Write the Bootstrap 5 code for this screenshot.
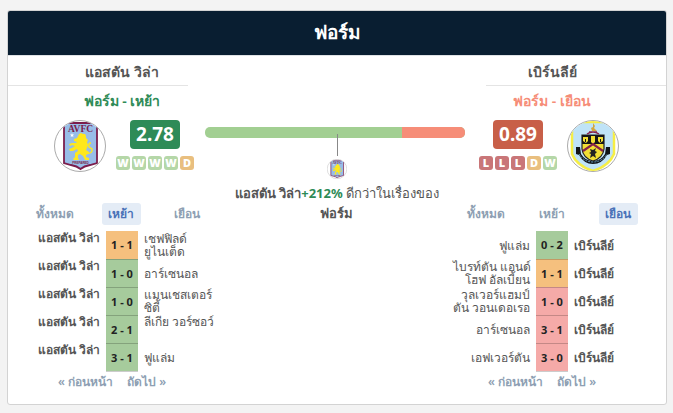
<!DOCTYPE html>
<html lang="th">
<head>
<meta charset="utf-8">
<meta name="viewport" content="width=device-width, initial-scale=1">
<title>ฟอร์ม</title>
<link href="https://cdn.jsdelivr.net/npm/bootstrap@5.3.0/dist/css/bootstrap.min.css" rel="stylesheet">
<style>
body{background:#f3f3f3;font-family:"Noto Sans",Tahoma,sans-serif;font-size:12px;color:#555;line-height:16px}
.panel{margin:10px 6px 7px 7px;border:1px solid #d3d3d3;border-radius:3px;background:#fff;overflow:hidden}
.panel-title{background:#091e31;color:#fff;font-size:19px;font-weight:600;line-height:42px;height:44px}
.compare{display:grid;grid-template-columns:213fr 232fr 213fr;border-top:1px solid #dfe2e5;padding-bottom:12px}
.team-head{width:180px}
.team-name{font-size:14px;font-weight:600;line-height:32px;border-bottom:1px solid #e4e4e4;height:30px}
.form-kind{font-size:14px;font-weight:600;line-height:30px;height:30px}
.green{color:#2e8b57}
.coral{color:#f68d78}
.summary{height:52px;margin:4px 0 31px;gap:10px}
.home .summary{padding-left:46px}
.away .summary{padding-left:26px}
.crest{width:52px;height:52px}
.rating{width:50px;height:29px;border-radius:4px;color:#fff;font-size:19px;font-weight:700;line-height:29px;margin-bottom:7px}
.rating.good{background:#2e8b57}
.rating.bad{background:#c85f48}
.pills{gap:2px}
.pill{width:14px;height:14px;border-radius:3px;color:#fff;font-size:11px;font-weight:900;line-height:14px;display:flex;justify-content:center}
.w{background:#b5d7a8}.d{background:#e9bf7f}.l{background:#c97678}
.home .tabs{margin:0 1px 6px 14px}
.away .tabs{margin:0 15px 6px 0}
.tabs{display:grid;grid-template-columns:repeat(3,1fr);justify-items:center}
.tabs button{border:0;background:none;border-radius:3px;color:#8e9fb3;font-size:12px;font-weight:600;height:22px;line-height:22px;width:39px;padding:0;white-space:nowrap;display:flex;justify-content:center}
.tabs button.on{background:#e4ecf6;color:#4a72b8}
.games{border-collapse:collapse;line-height:13px;table-layout:fixed;width:100%}
.games td{height:28px;padding:0 6px;vertical-align:middle;white-space:nowrap}
.games .own{font-weight:600}
.home .own{text-align:right;vertical-align:top}
.away .games .rival{text-align:right;padding-left:0}
.home .c1{width:98px}
.away .c1{width:83px}
.c2{width:32px}
.games .score{padding:0;text-align:center;font-size:11px;font-weight:700;color:#222;border-bottom:1px solid #0003}
.win{background:#a6cb9c}.draw{background:#f5c07e}.loss{background:#f5aaa8}
.pager{gap:14px;line-height:20px;font-weight:600}
.home .pager{padding-left:50px}
.away .pager{padding-left:35px}
.pager a{color:#8e9fb3;text-decoration:none;white-space:nowrap}
.balance{padding-top:71px}
.bar{height:11px;border-radius:5px;margin:0 -12px 0 -16px;background:#a2cf92;align-self:stretch}
.bar .rest{width:24.3%;background:#f68d78}
.stem{width:1px;height:22px;background:#888;margin-top:-4px}
.mini{width:20px;height:20px;margin:3px 0 4px}
.verdict{font-size:13px;line-height:20px;white-space:nowrap}
</style>
<script src="https://cdn.jsdelivr.net/npm/bootstrap@5.3.0/dist/js/bootstrap.bundle.min.js"></script>
</head>
<body>
<svg class="position-absolute" width="0" height="0" aria-hidden="true">
<clipPath id="round"><circle cx="26" cy="26" r="25"/></clipPath>
<symbol id="villa" viewBox="0 0 52 52">
<circle cx="26" cy="26" r="25.500" fill="#fff" stroke="#aaa"/>
<g clip-path="url(#round)">
<path d="M10 3H43V43L36 45Q30 46 26.500 49 23 46 17 45L10 43Z" fill="#98bde8" stroke="#7b1d4c" stroke-width="1.800"/>
<text x="26.500" y="12" text-anchor="middle" font-family="Liberation Serif,serif" font-weight="700" font-size="9.500" fill="#7b1d4c">AVFC</text>
<path d="M18 13l.6 1.400 1.500.1-1.100 1 .4 1.500-1.400-.8-1.300.8.4-1.500-1.100-1 1.500-.1z" fill="#fff"/>
<path d="M25 14l2-1 2 1 2 0 1 2 0 2 2 2-1 2 1 3-1 3-1 2 3 2-1 2-2 1 0 2 3 1 0 2-4 0-2-4-3-2-2 1 0 3 1 2-5 0-1-1 2-2 0-4 3-2-1-2-4 2-3 0-1-2 3-1 3-2-3-1-2 1-1-2 3-1 4 0 1-1-3-1 0-2 3-1z" fill="#ffe81c"/>
<path d="M32 33q7 1 6-4l-3-2q-1-4 2-4" fill="none" stroke="#ffe81c" stroke-width="1.500"/>
<text x="26.500" y="44" text-anchor="middle" font-family="Liberation Sans,sans-serif" font-weight="700" font-size="3" fill="#7b1d4c">PREPARED</text>
</g>
</symbol>
<symbol id="burnley" viewBox="0 0 52 52">
<circle cx="26" cy="26" r="25.500" fill="#fff" stroke="#aaa"/>
<g clip-path="url(#round)">
<path d="M5 2H47V34Q42 46 26 51 10 46 5 34Z" fill="#bfe3f7" stroke="#f6ee45" stroke-width="2.500"/>
<path d="M15 15H37V29Q36 38 26 41 16 38 15 29Z" fill="#f2df35" stroke="#222" stroke-width="1.200"/>
<path d="M15 15H37V24H15Z" fill="#171717"/>
<path d="M16 17h5v4l-2 2-3-2zM24 16h4v6l-2 2-2-2zM31 17h5v4l-3 2-2-2z" fill="#f2df35"/>
<path d="M18 19h1v3h-1zM33 19h1v3h-1z" fill="#171717"/>
<path d="M16 31l10-7 10 7" fill="none" stroke="#87234a" stroke-width="2.200"/>
<path d="M23 29l3 1 3-2-1 3 2 1-2 2 1 4-3-2-3 2 1-4-2-1 2-1z" fill="#222"/>
<path d="M20 14q6-4 12 0M22 12h8" fill="none" stroke="#87234a" stroke-width="1.500"/>
<path d="M25 11l-1-3 2-1 0-4 2 3-1 2 3 3z" fill="#d5a63b"/>
<path d="M9 27h4l1 7q4 7 12 7t12-7l1-7h4v7l-3 1q-5 9-14 9T12 35l-3-1z" fill="#101418"/>
<path d="M12 34q5 8 14 8t14-8" fill="none" stroke="#6ba4c6" stroke-width="1" stroke-dasharray="2 1"/>
</g>
</symbol>
</svg>
<main class="panel">
<h1 class="panel-title text-center m-0">ฟอร์ม</h1>
<div class="compare">
<section class="home">
<div class="team-head text-center">
<div class="team-name ps-5">แอสตัน วิล่า</div>
<div class="form-kind green ps-5">ฟอร์ม - เหย้า</div>
</div>
<div class="summary d-flex">
<svg class="crest" role="img" aria-label="แอสตัน วิล่า"><use href="#villa"/></svg>
<div class="d-flex flex-column align-items-center">
<div class="rating good text-center">2.78</div>
<div class="pills d-flex"><span class="pill w">W</span><span class="pill w">W</span><span class="pill w">W</span><span class="pill w">W</span><span class="pill d">D</span></div>
</div>
</div>
<div class="tabs"><button type="button">ทั้งหมด</button><button type="button" class="on">เหย้า</button><button type="button">เยือน</button></div>
<table class="games">
<colgroup><col class="c1"><col class="c2"><col></colgroup>
<tbody>
<tr><td class="own">แอสตัน วิล่า</td><td class="score draw">1 - 1</td><td>เชฟฟิลด์<br>ยูไนเต็ด</td></tr>
<tr><td class="own">แอสตัน วิล่า</td><td class="score win">1 - 0</td><td>อาร์เซนอล</td></tr>
<tr><td class="own">แอสตัน วิล่า</td><td class="score win">1 - 0</td><td>แมนเชสเตอร์<br>ซิตี้</td></tr>
<tr><td class="own">แอสตัน วิล่า</td><td class="score win">2 - 1</td><td class="align-top">ลีเกีย วอร์ซอว์</td></tr>
<tr><td class="own">แอสตัน วิล่า</td><td class="score win">3 - 1</td><td>ฟูแล่ม</td></tr>
</tbody>
</table>
<nav class="pager d-flex" aria-label="แอสตัน วิล่า"><a href="#">« ก่อนหน้า</a><a href="#">ถัดไป »</a></nav>
</section>
<section class="balance d-flex flex-column align-items-center text-center">
<div class="bar d-flex justify-content-end overflow-hidden"><div class="rest"></div></div>
<div class="stem"></div>
<svg class="mini" viewBox="0 0 52 52" aria-hidden="true"><use href="#villa"/></svg>
<p class="verdict m-0"><b>แอสตัน วิล่า</b><b class="green">+212%</b> ดีกว่าในเรื่องของ<br><b>ฟอร์ม</b></p>
</section>
<section class="away">
<div class="team-head text-center ms-auto">
<div class="team-name pe-5">เบิร์นลีย์</div>
<div class="form-kind coral pe-5">ฟอร์ม - เยือน</div>
</div>
<div class="summary d-flex">
<div class="d-flex flex-column align-items-center">
<div class="rating bad text-center">0.89</div>
<div class="pills d-flex"><span class="pill l">L</span><span class="pill l">L</span><span class="pill l">L</span><span class="pill d">D</span><span class="pill w">W</span></div>
</div>
<svg class="crest" role="img" aria-label="เบิร์นลีย์"><use href="#burnley"/></svg>
</div>
<div class="tabs"><button type="button">ทั้งหมด</button><button type="button">เหย้า</button><button type="button" class="on">เยือน</button></div>
<table class="games">
<colgroup><col class="c1"><col class="c2"><col></colgroup>
<tbody>
<tr><td class="rival">ฟูแล่ม</td><td class="score win">0 - 2</td><td class="own">เบิร์นลีย์</td></tr>
<tr><td class="rival">ไบรท์ตัน แอนด์<br>โฮฟ อัลเบี้ยน</td><td class="score draw">1 - 1</td><td class="own">เบิร์นลีย์</td></tr>
<tr><td class="rival">วุลเวอร์แฮมป์<br>ตัน วอนเดอเรอ</td><td class="score loss">1 - 0</td><td class="own">เบิร์นลีย์</td></tr>
<tr><td class="rival">อาร์เซนอล</td><td class="score loss">3 - 1</td><td class="own">เบิร์นลีย์</td></tr>
<tr><td class="rival">เอฟเวอร์ตัน</td><td class="score loss">3 - 0</td><td class="own">เบิร์นลีย์</td></tr>
</tbody>
</table>
<nav class="pager d-flex" aria-label="เบิร์นลีย์"><a href="#">« ก่อนหน้า</a><a href="#">ถัดไป »</a></nav>
</section>
</div>
</main>
</body>
</html>
